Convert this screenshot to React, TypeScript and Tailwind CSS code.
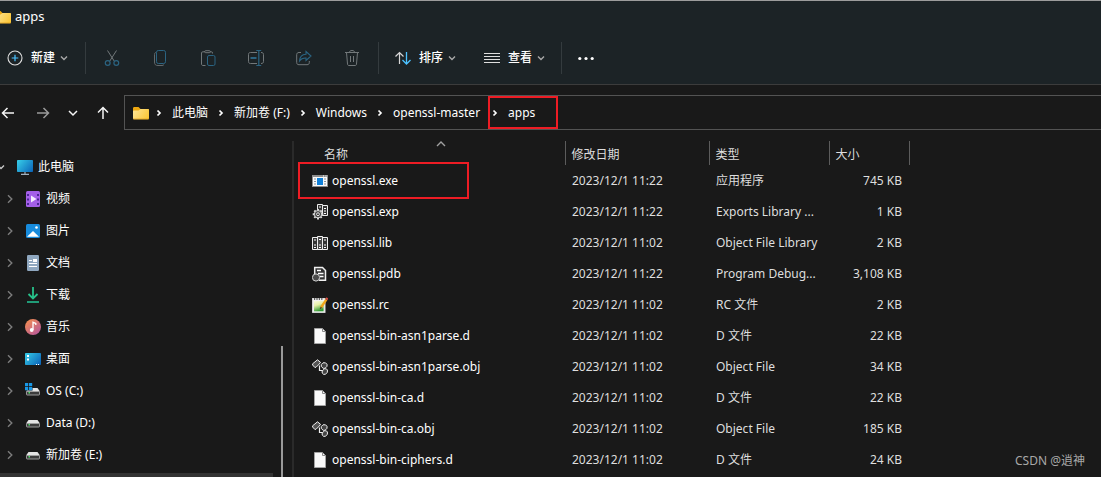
import type { ReactNode } from "react";

type SvgProps = { children: ReactNode; size?: number };

function Svg({ children, size = 16 }: SvgProps) {
  return (
    <svg
      width={size}
      height={size}
      viewBox={`0 0 ${size} ${size}`}
      fill="none"
      stroke="currentColor"
      className="block shrink-0"
      aria-hidden="true"
    >
      {children}
    </svg>
  );
}

function Chevron({ dir, bold }: { dir: "down" | "right" | "up"; bold?: boolean }) {
  const d =
    dir === "down" ? "M2 3.5 5 6.5 8 3.5" : dir === "up" ? "M1 7 5 3 9 7" : bold ? "M3.5 2.5 6 5 3.5 7.5" : "M3 1.3 6.8 5 3 8.7";
  return (
    <Svg size={10}>
      <path d={d} strokeWidth={bold ? 1.7 : 1.4} />
    </Svg>
  );
}

const Folder = () => (
  <Svg>
    <path d="M0 3.5C0 2.5.5 2 1.5 2H5.5L7.5 4H14.5C15.5 4 16 4.5 16 5.5V9H0Z" fill="#eda710" stroke="none" />
    <path d="M0 6.5C0 5.8.4 5.5 1 5.5H5.5L7.5 4H14.8C15.6 4 16 4.5 16 5.2V13C16 13.8 15.6 14.3 14.8 14.3H1.2C.4 14.3 0 13.8 0 13Z" fill="url(#folderFill)" stroke="none" />
    <path d="M.4 14H15.6" stroke="#e5a522" strokeWidth=".8" />
    <defs>
      <linearGradient id="folderFill" x1="0" y1="4" x2="16" y2="14" gradientUnits="userSpaceOnUse">
        <stop stopColor="#ffe69a" />
        <stop offset="1" stopColor="#fcc530" />
      </linearGradient>
    </defs>
  </Svg>
);

/* Command bar icons */

const PlusCircle = () => (
  <Svg>
    <circle cx="8" cy="8" r="7" stroke="#dedede" strokeWidth="1.1" />
    <path d="M8 4.7V11.3M4.7 8H11.3" stroke="#4cc2ff" strokeWidth="1.2" />
  </Svg>
);

const Cut = () => (
  <Svg>
    <path d="M3.5.5 10.2 11M12.5.5 5.8 11" stroke="#72787a" />
    <circle cx="3.7" cy="13" r="2.4" stroke="#2b6482" strokeWidth="1.2" />
    <circle cx="12.3" cy="13" r="2.4" stroke="#2b6482" strokeWidth="1.2" />
  </Svg>
);

const Copy = () => (
  <Svg>
    <path d="M4 2.5C2.9 2.7 2.5 3.2 2.5 4.5V12C2.5 14.5 3.5 15.5 6 15.5H10C11 15.5 11.5 15.2 12 14.5" stroke="#63696b" />
    <rect x="4.5" y=".5" width="9" height="13" rx="1.8" stroke="#2b6482" />
  </Svg>
);

const Paste = () => (
  <Svg>
    <path d="M5 1.8H2.8C2 1.8 1.5 2.3 1.5 3V14C1.5 14.9 2 15.5 3 15.5H5.5M10 1.8H11.5C12.2 1.8 12.5 2.3 12.5 3V3.5" stroke="#72787a" />
    <rect x="4.7" y=".7" width="5.6" height="2" rx="1" stroke="#72787a" />
    <rect x="7.5" y="5.5" width="7.5" height="10" rx="1.5" stroke="#2b6482" />
  </Svg>
);

const Rename = () => (
  <Svg>
    <path d="M9 2.5H2.5C1.2 2.5.5 3.2.5 4.5V11.5C.5 12.8 1.2 13.5 2.5 13.5H9M13 2.5C14.8 2.5 15.5 3.2 15.5 4.5V11.5C15.5 12.8 14.8 13.5 13 13.5" stroke="#72787a" />
    <path d="M2.5 8H8.5" stroke="#2b6482" strokeWidth="2" />
    <path d="M10.8.5V15.5M8.3.5H13.2M8.3 15.5H13.2" stroke="#2b6482" strokeWidth="1.2" />
  </Svg>
);

const Share = () => (
  <Svg>
    <path d="M5 2.5H3C1.5 2.5.7 3.3.7 4.7V12.5C.7 14 1.5 14.7 3 14.7H11C12.5 14.7 13.3 14 13.3 12.5V11" stroke="#72787a" />
    <path d="M10 1.5 15 6 10 10.5V8C7 7.8 5 8.7 3.5 11C3.7 7 6 4.4 10 4.2Z" stroke="#2b6482" strokeWidth="1.1" />
  </Svg>
);

const Trash = () => (
  <Svg>
    <path d="M1 2.5H15M5.5 2.5C5.5 1.2 6.2.5 8 .5S10.5 1.2 10.5 2.5M2.5 2.5 3.5 14C3.6 15 4 15.5 5 15.5H11C12 15.5 12.4 15 12.5 14L13.5 2.5M6.5 6V12M9.5 6V12" stroke="#72787a" />
  </Svg>
);

const Sort = () => (
  <Svg>
    <path d="M4.5 14V2.5M.5 6.5 4.5 2.5 8.5 6.5" stroke="#d6d6d6" strokeWidth="1.2" />
    <path d="M11.5 2V14M7.5 10 11.5 14 15.5 10" stroke="#4cc2ff" strokeWidth="1.3" />
  </Svg>
);

const Lines = () => (
  <Svg>
    <path d="M0 3.5H16M0 6.5H16M0 9.5H16M0 12.5H16" stroke="#dedede" />
  </Svg>
);

const Dots = () => (
  <Svg>
    <g fill="#fff" stroke="none">
      <circle cx="1.8" cy="8.5" r="1.6" />
      <circle cx="8" cy="8.5" r="1.6" />
      <circle cx="14.2" cy="8.5" r="1.6" />
    </g>
  </Svg>
);

/* Navigation arrows */

const arrowPaths = {
  back: "M14 8H2.5M7.5 3 2.5 8 7.5 13",
  forward: "M2 8H13.5M8.5 3 13.5 8 8.5 13",
  up: "M8 14V2.5M3 7.5 8 2.5 13 7.5",
  recent: "M4 6 8 10 12 6",
};

function NavButton({ kind, label, muted }: { kind: keyof typeof arrowPaths; label: string; muted?: boolean }) {
  return (
    <button type="button" aria-label={label} className={muted ? "text-[#9a9a9a]" : "text-[#f5f5f5]"}>
      <Svg>
        <path d={arrowPaths[kind]} strokeWidth="1.5" />
      </Svg>
    </button>
  );
}

/* Sidebar icons */

const Monitor = () => (
  <Svg>
    <defs>
      <linearGradient id="screen" x1="0" y1="0" x2="16" y2="13" gradientUnits="userSpaceOnUse">
        <stop stopColor="#39d3ea" />
        <stop offset="1" stopColor="#0b63b8" />
      </linearGradient>
    </defs>
    <rect y="1" width="16" height="12" rx=".8" fill="url(#screen)" stroke="none" />
    <path d="M8 13V15M4 15.3H12" stroke="#9fb0bf" strokeWidth="1.2" />
  </Svg>
);

const Video = () => (
  <Svg>
    <rect x="1" width="14" height="16" rx="1.5" fill="#a45fe8" stroke="none" />
    <path d="M3 3V14" stroke="#41208a" strokeWidth="1.8" strokeDasharray="2 2.5" />
    <path d="M13 3V14" stroke="#41208a" strokeWidth="1.8" strokeDasharray="2 2.5" />
    <path d="M6 4.5 11.5 8 6 11.5Z" fill="#f4ecff" stroke="none" />
  </Svg>
);

const Picture = () => (
  <Svg>
    <rect x="1" y="1" width="14" height="14" rx="1.5" fill="#178bdc" stroke="none" />
    <path d="M2 13.8 8 8 14 13.8Z" fill="#fff" stroke="none" />
    <circle cx="11.5" cy="4.5" r="1.3" fill="#fff" stroke="none" />
  </Svg>
);

const Doc = () => (
  <Svg>
    <rect x="2" width="12" height="16" rx="1.2" fill="#8fa7bf" stroke="none" />
    <path d="M4 5.5H7M4 8.5H12M4 11.5H12" stroke="#fff" strokeWidth="1.2" />
    <rect x="8" y="4" width="4" height="3" fill="#fff" stroke="none" />
  </Svg>
);

const Download = () => (
  <Svg>
    <path d="M8 0V11M3.5 7 8 11.5 12.5 7" stroke="#27c08a" strokeWidth="1.8" />
    <path d="M2 15H14" stroke="#22ab83" strokeWidth="1.8" />
  </Svg>
);

const Music = () => (
  <Svg>
    <defs>
      <linearGradient id="disc" x1="2" y1="2" x2="13" y2="15" gradientUnits="userSpaceOnUse">
        <stop stopColor="#ef8a55" />
        <stop offset="1" stopColor="#b95a98" />
      </linearGradient>
    </defs>
    <circle cx="8" cy="8" r="8" fill="url(#disc)" stroke="none" />
    <circle cx="6.7" cy="11" r="1.9" fill="#fff" stroke="none" />
    <path d="M8 11V3.3L10.8 4.5V6" stroke="#fff" strokeWidth="1.3" />
  </Svg>
);

const Desktop = () => (
  <Svg>
    <rect y="2" width="16" height="12" rx=".8" fill="url(#screen)" stroke="none" />
    <path d="M2 5H4M2 8.500H4" stroke="#fff" strokeWidth="2" />
    <path d="M11 13.5H12M13 13.5H14" stroke="#fff" />
  </Svg>
);

function Drive({ system }: { system?: boolean }) {
  return (
    <Svg>
      <path d="M3.5 5H12.5L15 8.5H1Z" fill="#e4e4e4" stroke="none" />
      <rect x="1.5" y="8.5" width="13" height="3.5" rx=".6" fill="#3c3c3c" stroke="#a8a8a8" strokeWidth=".9" />
      <rect x="3.5" y="9" width="1.5" height="1.5" fill="#4fe36b" stroke="none" />
      {system && (
        <>
          <path d="M0 0H7.5V7.5H0Z" fill="#191919" stroke="none" />
          <path d="M0 0H3.2V3.2H0ZM4 0H7.2V3.2H4ZM0 4H3.2V7.2H0ZM4 4H7.2V7.2H4Z" fill="#1998e6" stroke="none" />
        </>
      )}
    </Svg>
  );
}

/* File icons */

const ExeIcon = () => (
  <Svg>
    <rect x=".5" y="2.5" width="15" height="11" fill="#fafafa" stroke="#8d8d8d" />
    <path d="M0 3H16" stroke="#8d8d8d" strokeWidth="2" />
    <path d="M11 3H12M13.5 3H14.5" stroke="#fff" />
    <rect x="5" y="5" width="6" height="7" fill="#1180d8" stroke="none" />
    <path d="M2 6H4M2 8.5H4M2 11H4M12 6H14M12 8.5H14M12 11H14" stroke="#8b9299" />
  </Svg>
);

const ExpIcon = () => (
  <Svg>
    <path d="M5.500.500H10.500V11.500H5.500Z" fill="#333" stroke="#ececec" />
    <path d="M10.500 1.500H15.500V11.500H10.500Z" fill="#333" stroke="#ececec" />
    <path d="M7 3H9M12 4.500H14M12 7H14M12 9.500H14" stroke="#fff" />
    <path
      d="M6 5V15.500M.7 10.200H11.300M2.300 6.500 9.700 13.900M9.700 6.500 2.300 13.900"
      stroke="#d8d8d8"
      strokeWidth="2"
    />
    <circle cx="6" cy="10.200" r="3.700" fill="#4a4a4a" stroke="#d8d8d8" />
    <circle cx="6" cy="10.200" r="1.400" fill="#191919" stroke="#eee" />
  </Svg>
);

const LibIcon = () => (
  <Svg>
    <path d="M.5 2.5H5.5V14.5H.5ZM10.5 2.5H15.5V14.5H10.5Z" fill="#333" stroke="#f0f0f0" />
    <path d="M5.5 1.5H10.5V14.5H5.5Z" fill="#484848" stroke="#f0f0f0" />
    <path d="M2 5H4M2 10H4M2 12.5H4M12 5H14M12 10H14M12 12.5H14M7 4.5H9M7 10H9M7 12.5H9" stroke="#fff" />
  </Svg>
);

const PdbIcon = () => (
  <Svg>
    <path d="M2.7 8V1.5H10.5L13.5 4.5V14.3H7" fill="#333" stroke="#f0f0f0" strokeWidth="1.5" />
    <path d="M5 4.5H9M6 7.5H11.5M8 10.5H11.5" stroke="#fff" strokeWidth="1.3" />
    <circle cx="4" cy="11.5" r="3.6" fill="#4b4b4b" stroke="#d5d5d5" />
  </Svg>
);

const RcIcon = () => (
  <Svg>
    <defs>
      <linearGradient id="note" x1="0" y1="3" x2="4" y2="15" gradientUnits="userSpaceOnUse">
        <stop stopColor="#fdfef4" />
        <stop offset=".5" stopColor="#e6f0a8" />
        <stop offset="1" stopColor="#2f9a32" />
      </linearGradient>
    </defs>
    <rect x=".6" y="1.500" width="12.400" height="13.900" fill="#f2f2f2" stroke="#dcdcdc" />
    <rect x="2" y="4" width="9.600" height="10.300" fill="url(#note)" stroke="none" />
    <path d="M2 2H11.500" stroke="#606060" strokeWidth="1.800" strokeDasharray="1.200 1.200" />
    <path d="M14.300 2.600 9 10.500" stroke="#f0a51a" strokeWidth="2.400" />
    <path d="M9.300 10 8.300 12" stroke="#5a4526" strokeWidth="1.300" />
    <path d="M15.500.800 14.300 2.600" stroke="#d84c42" strokeWidth="2.400" />
  </Svg>
);

const PageIcon = () => (
  <Svg>
    <path d="M2.5.5H10.5L13.5 3.5V15.5H2.5Z" fill="#fafafa" stroke="#a4a4a4" />
    <path d="M10.5.5V3.5H13.5" stroke="#8a8a8a" />
  </Svg>
);

const ObjIcon = () => (
  <Svg>
    <path d="M5.500.800 8.500 3.300 7.300 5 4 8.300H2.700L.600 6V4.800Z" fill="#555" stroke="#efefef" />
    <path d="M7.500 6.500V11.500H11" stroke="#efefef" strokeWidth="1.200" />
    <path d="M11 3.800H13.500L15 5.300V7.300L13 9.300H11.200L9.300 7.500V5.500Z" fill="#444" stroke="#efefef" />
    <path d="M12.500 9.800H14.300L15.400 11V13.200L13.500 15.300H11.500L10.200 14V12Z" fill="#444" stroke="#efefef" />
  </Svg>
);

type Place = { name: string; icon: ReactNode };

const places: Place[] = [
  { name: "视频", icon: <Video /> },
  { name: "图片", icon: <Picture /> },
  { name: "文档", icon: <Doc /> },
  { name: "下载", icon: <Download /> },
  { name: "音乐", icon: <Music /> },
  { name: "桌面", icon: <Desktop /> },
  { name: "OS (C:)", icon: <Drive system /> },
  { name: "Data (D:)", icon: <Drive /> },
  { name: "新加卷 (E:)", icon: <Drive /> },
];

type FileRow = { name: string; icon: ReactNode; date: string; type: string; size: string };

const files: FileRow[] = [
  { name: "openssl.exe", icon: <ExeIcon />, date: "2023/12/1 11:22", type: "应用程序", size: "745 KB" },
  { name: "openssl.exp", icon: <ExpIcon />, date: "2023/12/1 11:22", type: "Exports Library ...", size: "1 KB" },
  { name: "openssl.lib", icon: <LibIcon />, date: "2023/12/1 11:02", type: "Object File Library", size: "2 KB" },
  { name: "openssl.pdb", icon: <PdbIcon />, date: "2023/12/1 11:22", type: "Program Debug...", size: "3,108 KB" },
  { name: "openssl.rc", icon: <RcIcon />, date: "2023/12/1 11:02", type: "RC 文件", size: "2 KB" },
  { name: "openssl-bin-asn1parse.d", icon: <PageIcon />, date: "2023/12/1 11:02", type: "D 文件", size: "22 KB" },
  { name: "openssl-bin-asn1parse.obj", icon: <ObjIcon />, date: "2023/12/1 11:02", type: "Object File", size: "34 KB" },
  { name: "openssl-bin-ca.d", icon: <PageIcon />, date: "2023/12/1 11:02", type: "D 文件", size: "22 KB" },
  { name: "openssl-bin-ca.obj", icon: <ObjIcon />, date: "2023/12/1 11:02", type: "Object File", size: "185 KB" },
  { name: "openssl-bin-ciphers.d", icon: <PageIcon />, date: "2023/12/1 11:02", type: "D 文件", size: "24 KB" },
];

const tools = [
  { label: "剪切", icon: <Cut /> },
  { label: "复制", icon: <Copy /> },
  { label: "粘贴", icon: <Paste /> },
  { label: "重命名", icon: <Rename /> },
  { label: "共享", icon: <Share /> },
  { label: "删除", icon: <Trash /> },
];

function MenuButton({ icon, label }: { icon: ReactNode; label: string }) {
  return (
    <button type="button" className="flex items-center gap-2 font-medium text-white">
      {icon}
      <span className="flex items-center gap-1">
        {label}
        <span className="text-[#a8a8a8]">
          <Chevron dir="down" />
        </span>
      </span>
    </button>
  );
}

const Separator = () => <div className="h-8 w-px bg-[#343b3e]" />;

function Crumb({ label }: { label: string }) {
  return (
    <>
      <Chevron dir="right" bold />
      <a href="#" className="px-2">
        {label}
      </a>
    </>
  );
}

export default function App() {
  return (
    <div className="flex h-screen flex-col overflow-hidden bg-[#191919] font-['Noto_Sans','Noto_Sans_CJK_SC',sans-serif] text-xs text-white">
      <header className="border-t border-b border-t-[#9c9c9c] border-b-[#3c3c3c] bg-[#1c2326]">
        <div className="-ml-[5px] flex h-[31px] items-center gap-1 text-[13px]">
          <Folder />
          <h1>apps</h1>
        </div>
        <div className="flex h-13 items-center pl-[7px]">
          <MenuButton icon={<PlusCircle />} label="新建" />
          <div className="flex items-center gap-[18px] pl-4">
            <Separator />
            <div className="flex gap-8">
              {tools.map((t) => (
                <button key={t.label} type="button" aria-label={t.label} disabled>
                  {t.icon}
                </button>
              ))}
            </div>
            <Separator />
          </div>
          <div className="flex items-center gap-[27px] pl-4">
            <MenuButton icon={<Sort />} label="排序" />
            <MenuButton icon={<Lines />} label="查看" />
          </div>
          <div className="flex items-center gap-4 pl-[15px]">
            <Separator />
            <button type="button" aria-label="更多">
              <Dots />
            </button>
          </div>
        </div>
      </header>

      <nav className="flex items-center pt-[10px] pb-[11px]" aria-label="地址">
        <div className="flex w-31 shrink-0 items-center gap-[15px]">
          <NavButton kind="back" label="后退" />
          <div className="flex items-center gap-[14px] pl-1">
            <NavButton kind="forward" label="前进" muted />
            <NavButton kind="recent" label="最近" />
            <NavButton kind="up" label="向上" />
          </div>
        </div>
        <div className="flex h-[35px] flex-1 items-center border border-r-0 border-[#535353] pl-2">
          <span className="pr-[5px]">
            <Folder />
          </span>
          <Crumb label="此电脑" />
          <Crumb label="新加卷 (F:)" />
          <Crumb label="Windows" />
          <Crumb label="openssl-master" />
          <div className="flex h-full w-[70px] items-center border-2 border-[#ed1c24]">
            <Crumb label="apps" />
          </div>
        </div>
      </nav>

      <main className="flex min-h-0 flex-1">
        <aside className="flex w-[294px] shrink-0 justify-between border-r-2 border-[#2a2a2a]">
          <ul className="w-[273px] pt-[10px]">
            <li className="flex h-8 items-center gap-[5px]">
              <span className="-ml-1 pr-1.5 text-[#c8c8c8]">
                <Chevron dir="down" />
              </span>
              <Monitor />
              此电脑
            </li>
            {places.map((p) => (
              <li key={p.name} className="flex h-8 items-center gap-[5px] pl-[5px]">
                <span className="pr-[5px] text-[#7c7c7c]">
                  <Chevron dir="right" />
                </span>
                {p.icon}
                {p.name}
              </li>
            ))}
            <li className="mt-0.5 h-8 bg-[#333333]" />
          </ul>
          <div className="mt-[205px] mr-[9px] w-0.5 bg-[#9a9a9a]" />
        </aside>

        <section className="relative min-w-0 flex-1 overflow-hidden">
          <table className="w-full table-fixed border-collapse text-left">
            <colgroup>
              <col className="w-[271px]" />
              <col className="w-36" />
              <col className="w-30" />
              <col className="w-20" />
              <col />
            </colgroup>
            <thead className="text-[#dedede]">
              <tr className="h-6">
                <th className="relative p-0 pt-1 pl-[30px] font-normal">
                  名称
                  <span className="absolute -top-0.5 left-[142px] text-[#a0a0a0]">
                    <Chevron dir="up" />
                  </span>
                </th>
                <th className="border-l border-[#5c5c5c] p-0 pt-1 pl-1.5 font-normal">修改日期</th>
                <th className="border-l border-[#5c5c5c] p-0 pt-1 pl-1.5 font-normal">类型</th>
                <th className="border-x border-[#5c5c5c] p-0 pt-1 pl-1.5 font-normal">大小</th>
                <th className="p-0" />
              </tr>
            </thead>
            <tbody className="text-[#dedede]">
              {files.map((f) => (
                <tr key={f.name} className="h-[31px] whitespace-nowrap">
                  <td className="p-0 pl-[18px] text-white">
                    <span className="flex items-center gap-1">
                      {f.icon}
                      {f.name}
                    </span>
                  </td>
                  <td className="p-0 pl-[7px]">{f.date}</td>
                  <td className="p-0 pl-[7px]">{f.type}</td>
                  <td className="p-0 pr-[7px] text-right">{f.size}</td>
                  <td className="p-0" />
                </tr>
              ))}
            </tbody>
          </table>
          <div className="pointer-events-none absolute top-[21px] left-1 h-[37px] w-[171px] border-2 border-[#ed1c24]" />
          <p className="absolute right-4 bottom-2 text-[#a8a8a8]">CSDN @逍神</p>
        </section>
      </main>
    </div>
  );
}
